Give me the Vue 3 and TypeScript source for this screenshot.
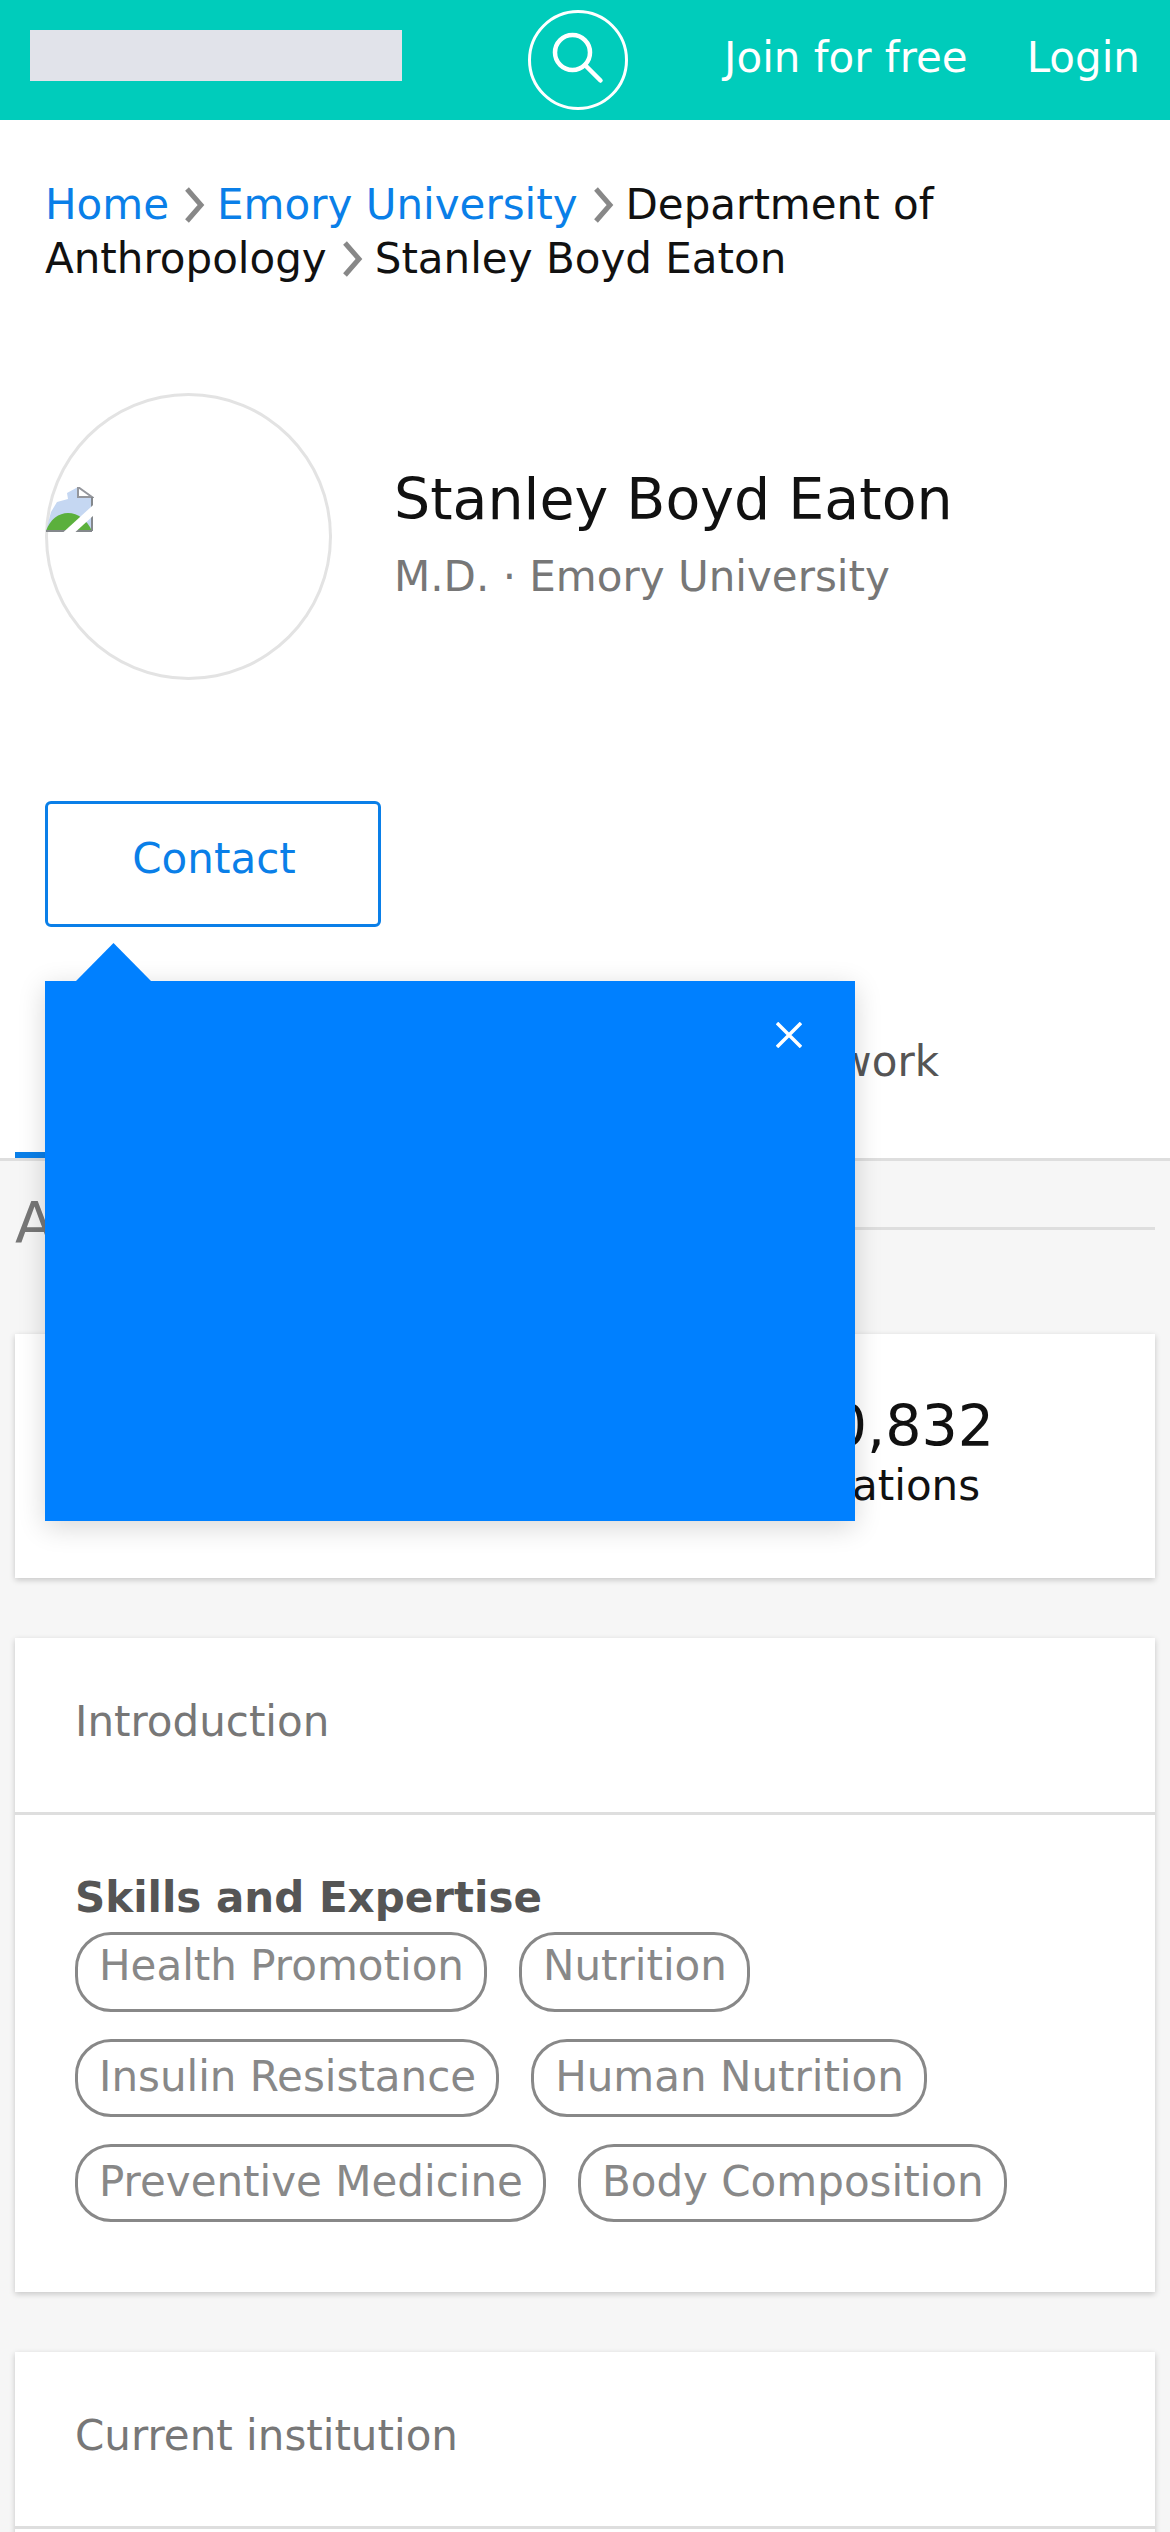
<template>
  <div class="page">
    <header class="topbar">
      <div class="logo"></div>
      <button class="search" type="button" aria-label="Search">
        <svg viewBox="0 0 60 60" width="60" height="60" fill="none" stroke="#fff" stroke-width="4.5">
          <circle cx="24.5" cy="22.5" r="17.5" />
          <path d="M37 35 L52.5 50.5" stroke-linecap="round" />
        </svg>
      </button>
      <nav class="top-links">
        <a>Join for free</a>
        <a>Login</a>
      </nav>
    </header>

    <div class="breadcrumb">
      <template v-for="(crumb, i) in crumbs" :key="crumb.label">
        <a :class="{ link: crumb.link }">{{ crumb.label }}</a>
        <svg v-if="i < crumbs.length - 1" class="chev" viewBox="0 0 21 36" width="21" height="36" fill="none" stroke="#888" stroke-width="5">
          <path d="M3 2 L17 18 L3 34" />
        </svg>
      </template>
    </div>

    <section class="profile">
      <div class="avatar">
        <!-- browser's broken image icon -->
        <svg class="broken" viewBox="0 0 48 46" width="48" height="46">
          <path d="M0 44 L5 25 L11 15 L22 12 L21 6 L32 0 L46 10 L46 44 Z" fill="#c5d7f2" />
          <path d="M0 44 C4 32 13 26 22 26 C32 26 41 33 46 44 Z" fill="#5bb03c" />
          <path d="M32 0 L32 10 L46 10 Z" fill="#fff" stroke="#94969c" stroke-width="2" />
          <path d="M0 44 L46 44 M46 10 L46 44" stroke="#84888c" stroke-width="2" fill="none" />
          <path d="M18 50 L52 19" stroke="#fff" stroke-width="8" />
        </svg>
      </div>
      <div class="who">
        <h1>Stanley Boyd Eaton</h1>
        <p>M.D. · Emory University</p>
      </div>
    </section>

    <div class="contact-wrap">
      <button class="contact" type="button">Contact</button>
      <div class="popup">
        <span class="arrow"></span>
        <svg class="close" viewBox="0 0 26 26" width="26" height="26" stroke="#fff" stroke-width="3.5">
          <path d="M1 1 L25 25 M25 1 L1 25" />
        </svg>
      </div>
    </div>

    <nav class="tabs">
      <a class="tab active">Overview</a>
      <a class="tab">Network</a>
    </nav>

    <main class="content">
      <div class="section-head">
        <h2>About</h2>
        <span class="rule"></span>
      </div>

      <section class="card stats">
        <div class="stat">
          <strong>10,832</strong>
          <span>Citations</span>
        </div>
      </section>

      <section class="card">
        <h3 class="card-title">Introduction</h3>
        <div class="card-body">
          <h4>Skills and Expertise</h4>
          <div class="tags">
            <span v-for="(tag, i) in skills" :key="tag" class="tag" :class="{ 'tag-tall': i < 2 }">{{ tag }}</span>
          </div>
        </div>
      </section>

      <section class="card last">
        <h3 class="card-title">Current institution</h3>
      </section>
    </main>
  </div>
</template>

<script setup lang="ts">
const crumbs = [
  { label: "Home", link: true },
  { label: "Emory University", link: true },
  { label: "Department of Anthropology", link: false },
  { label: "Stanley Boyd Eaton", link: false },
];

const skills = [
  "Health Promotion",
  "Nutrition",
  "Insulin Resistance",
  "Human Nutrition",
  "Preventive Medicine",
  "Body Composition",
];
</script>

<style>
html,
body {
  margin: 0;
  background: #fff;
}
</style>

<style scoped>
.page {
  height: 2532px;
  overflow: hidden;
  font-family: "DejaVu Sans", sans-serif;
  font-size: 42px;
  color: #111;
}

.topbar {
  height: 120px;
  background: #00ccbb;
  display: flex;
  align-items: center;
  padding: 0 30px;
  box-sizing: border-box;
}

.logo {
  width: 372px;
  height: 51px;
  margin-top: -9px;
  background: #e1e3ea;
}

.search {
  width: 100px;
  height: 100px;
  margin-left: 126px;
  padding: 0;
  border: 3px solid #fff;
  border-radius: 50%;
  background: none;
  display: flex;
  align-items: center;
  justify-content: center;
}

.top-links {
  margin-left: auto;
  display: flex;
  gap: 59px;
  color: #fff;
  margin-top: -6px;
}

.breadcrumb {
  padding: 58px 45px 0;
  line-height: 54px;
}

.breadcrumb a {
  color: #111;
}

.breadcrumb a.link {
  color: #0a7fe8;
}

.chev {
  vertical-align: -4px;
  margin: 0 12px 0 15px;
}

.profile {
  display: flex;
  align-items: center;
  gap: 62px;
  margin: 107px 45px 0;
}

.avatar {
  width: 287px;
  height: 287px;
  box-shadow: inset 0 0 0 3px #e3e3e3;
  border-radius: 50%;
  overflow: hidden;
  flex: none;
}

.broken {
  display: block;
  margin-top: 94px;
  margin-left: 1px;
}

.who h1 {
  margin: 0;
  font-size: 57px;
  font-weight: 400;
  line-height: 70px;
  color: #111;
}

.who p {
  margin: 10px 0 0;
  color: #777;
  line-height: 66px;
}

.contact-wrap {
  position: relative;
  margin: 121px 45px 0;
}

.contact {
  display: block;
  width: 336px;
  height: 126px;
  padding: 0 0 12px 2px;
  border: 3px solid #0a7fe8;
  border-radius: 6px;
  background: #fff;
  color: #0a7fe8;
  font: inherit;
}

.popup {
  position: absolute;
  z-index: 2;
  left: 0;
  top: 180px;
  width: 810px;
  height: 540px;
  background: #0080ff;
  box-shadow: 0 6px 26px rgba(0, 0, 0, 0.16);
}

.arrow {
  position: absolute;
  left: 31px;
  top: -38px;
  width: 75px;
  height: 38px;
  background: #0080ff;
  clip-path: polygon(50% 0, 100% 100%, 0 100%);
}

.close {
  position: absolute;
  right: 53px;
  top: 41px;
}

.tabs {
  display: flex;
  justify-content: space-between;
  align-items: flex-start;
  height: 231px;
  padding: 0 231px 0 15px;
  border-bottom: 3px solid #dedede;
}

.tab {
  color: #555;
  padding-top: 110px;
  height: 115px;
}

.tab.active {
  padding-left: 60px;
  padding-right: 60px;
  border-bottom: 6px solid #0a7fe8;
}

.content {
  background: #f6f6f6;
  padding: 0 15px;
  height: 1400px;
}

.section-head {
  display: flex;
  align-items: center;
  gap: 24px;
  padding-top: 22px;
  height: 90px;
}

.section-head h2 {
  margin: -10px 0 0;
  font-size: 57px;
  font-weight: 400;
  color: #777;
}

.rule {
  flex: 1;
  height: 3px;
  background: #dedede;
}

.card {
  background: #fff;
  margin-top: 60px;
  box-shadow: 0 2px 6px rgba(0, 0, 0, 0.2);
}

.stats {
  height: 244px;
  margin-top: 61px;
  display: flex;
  justify-content: flex-end;
  padding-right: 161px;
}

.stat {
  display: flex;
  flex-direction: column;
  padding-top: 57px;
}

.stat strong {
  font-weight: 400;
  font-size: 57px;
  line-height: 70px;
  color: #111;
}

.stat span {
  line-height: 50px;
}

.card-title {
  margin: 0;
  padding: 0 60px;
  height: 174px;
  line-height: 168px;
  font-size: 42px;
  font-weight: 400;
  color: #777;
  border-bottom: 3px solid #dedede;
}

.card-body {
  padding: 56px 60px 70px;
}

.card-body h4 {
  margin: 0 0 7px;
  font-size: 42px;
  line-height: 54px;
  font-weight: 700;
  color: #555;
}

.tags {
  display: flex;
  flex-wrap: wrap;
  gap: 27px 32px;
}

.tag {
  height: 78px;
  box-sizing: border-box;
  padding: 0 20px 0 21px;
  line-height: 69px;
  border: 3px solid #888;
  border-radius: 36px;
  color: #888;
}

.tag-tall {
  height: 80px;
  line-height: 62px;
}

.last {
  height: 300px;
}
</style>
